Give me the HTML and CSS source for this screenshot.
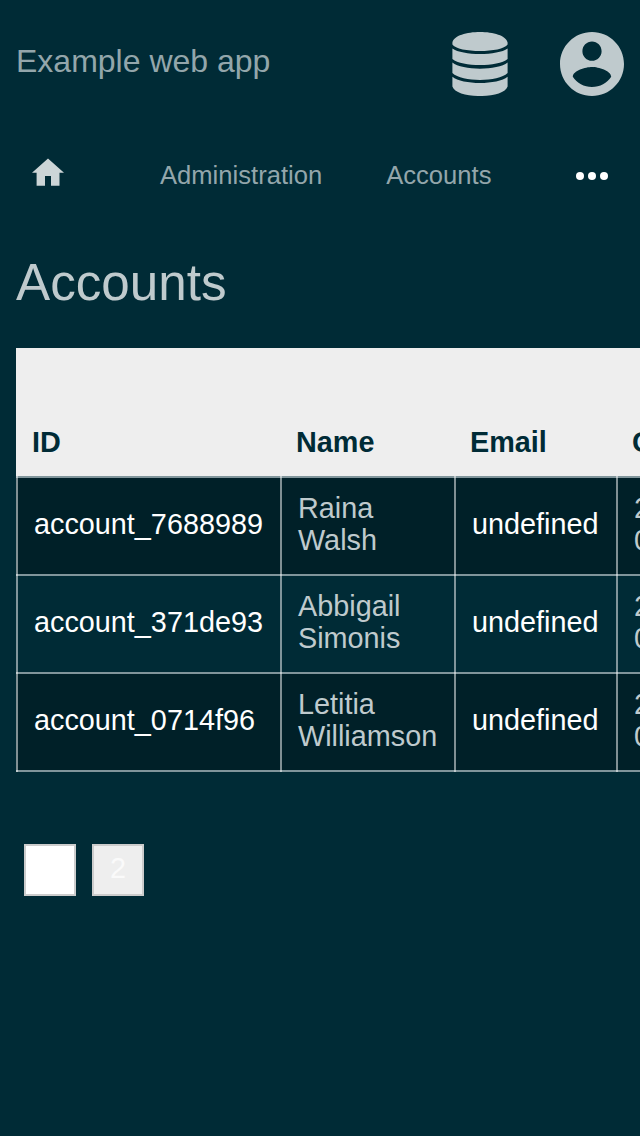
FILE: index.html
```html
<!DOCTYPE html>
<html lang="en">
<head>
<meta charset="utf-8">
<title>Accounts</title>
<link rel="stylesheet" href="styles.css">
</head>
<body>
<header class="topbar">
  <span class="brand">Example web app</span>
  <svg class="icon-db" viewBox="0 0 56 64"><path d="M.4 10.500C3-3.500 53-3.500 55.600 10.500V12.500C50 21.200 6 21.200 .4 12.500ZM.4 16.500C10 23.800 46 23.800 55.600 16.500V27C46 35 10 35 .4 27ZM.4 30.500C10 38.700 46 38.700 55.600 30.500V41C46 50.300 10 50.300 .4 41ZM.4 44.700C10 53 46 53 55.600 44.700V54.500C52 67.200 4 67.200 .4 54.500Z"/></svg>
  <svg class="icon-user" viewBox="2 2 20 20"><path d="M12 2C6.480 2 2 6.480 2 12s4.480 10 10 10 10-4.480 10-10S17.520 2 12 2zm0 3c1.660 0 3 1.340 3 3s-1.340 3-3 3-3-1.340-3-3 1.340-3 3-3zm0 14.200c-2.500 0-4.710-1.280-6-3.220.030-1.990 4-3.080 6-3.080 1.990 0 5.970 1.090 6 3.080-1.290 1.940-3.500 3.220-6 3.220z"/></svg>
</header>
<nav class="crumbs">
  <svg class="icon-home" viewBox="0 0 32 28"><path d="M16 .5L32 14.700H27.500V27.700H19V18H13V27.700H4.600V14.700H0Z"/></svg>
  <span class="crumb crumb-admin">Administration</span>
  <span class="crumb">Accounts</span>
  <svg class="icon-more" viewBox="0 0 32 8"><circle cx="4" cy="4" r="4"/><circle cx="16" cy="4" r="4"/><circle cx="28" cy="4" r="4"/></svg>
</nav>
<main>
  <h1>Accounts</h1>
  <div class="table-wrap">
  <table class="accounts">
    <colgroup><col class="c-id"><col class="c-name"><col class="c-email"><col class="c-created"></colgroup>
    <thead><tr><th>ID</th><th>Name</th><th>Email</th><th>Created</th></tr></thead>
    <tbody>
      <tr><td class="link">account_7688989</td><td>Raina Walsh</td><td class="link">undefined</td><td>2018-<br>01-01</td></tr>
      <tr><td class="link">account_371de93</td><td>Abbigail Simonis</td><td class="link">undefined</td><td>2018-<br>01-01</td></tr>
      <tr><td class="link">account_0714f96</td><td>Letitia Williamson</td><td class="link">undefined</td><td>2018-<br>01-01</td></tr>
    </tbody>
  </table>
  </div>
  <div class="pager"><span class="page current">1</span><span class="page">2</span></div>
</main>
</body>
</html>
```
FILE: styles.css
```css
* { box-sizing: border-box; }
body {
  margin: 0;
  height: 1136px;
  overflow: hidden;
  background: #002b36;
  color: #bfcacd;
  font-family: "Liberation Sans", Arial, sans-serif;
  font-size: 28.8px;
  line-height: 32px;
}
svg { display: block; fill: #bfcacd; flex: none; }
.topbar {
  display: flex;
  align-items: flex-start;
  height: 128px;
  padding: 32px 16px 0;
}
.brand {
  flex: 1;
  font-size: 32px;
  line-height: 36px;
  padding-top: 11px;
  color: #93a6ab;
}
.icon-db { width: 56px; height: 64px; margin-right: 52px; }
.icon-user { width: 64px; height: 64px; }
.crumbs {
  display: flex;
  align-items: center;
  height: 96px;
  padding: 0 32px;
  font-size: 25.6px;
  color: #93a6ab;
}
.icon-home { width: 32px; height: 28px; margin: -8px 96px 0 0; fill: #ccd5d7; }
.crumb { padding-bottom: 2px; }
.crumb-admin { margin-right: 64px; }
.icon-more { width: 32px; height: 8px; margin-left: auto; fill: #fff; }
h1 {
  margin: 0;
  padding: 30px 16px 0;
  height: 124px;
  font-size: 51.2px;
  line-height: 58px;
  font-weight: 400;
}
.table-wrap { margin-left: 16px; overflow: hidden; }
.accounts {
  width: 800px;
  table-layout: fixed;
  border-collapse: separate;
  border-spacing: 0;
}
.c-id { width: 264px; }
.c-name { width: 174px; }
.c-email { width: 162px; }
.c-created { width: 200px; }
th {
  height: 128px;
  padding: 0 16px 18px;
  vertical-align: bottom;
  text-align: left;
  background: #eee;
  color: #002b36;
}
td {
  position: relative;
  height: 98px;
  padding: 0 16px 4px 18px;
  vertical-align: middle;
  border-top: 2px solid rgba(255, 255, 255, .5);
  background: #002b36;
}
td::before {
  content: "";
  position: absolute;
  left: 0;
  top: -2px;
  bottom: 0;
  width: 2px;
  background: rgba(255, 255, 255, .5);
}
tr:nth-child(odd) td { background: #002028; background-clip: padding-box; }
tr:last-child td { height: 100px; border-bottom: 2px solid rgba(255, 255, 255, .5); }
tr:last-child td::before { bottom: -2px; }
.link { color: #fff; }
.pager { display: flex; gap: 16px; padding: 72px 24px 0; }
.page {
  width: 52px;
  height: 52px;
  border: 2px solid #ccc;
  background: #eee;
  color: #fafafa;
  text-align: center;
  line-height: 44px;
}
.current { background: #fff; color: #fff; }
```
